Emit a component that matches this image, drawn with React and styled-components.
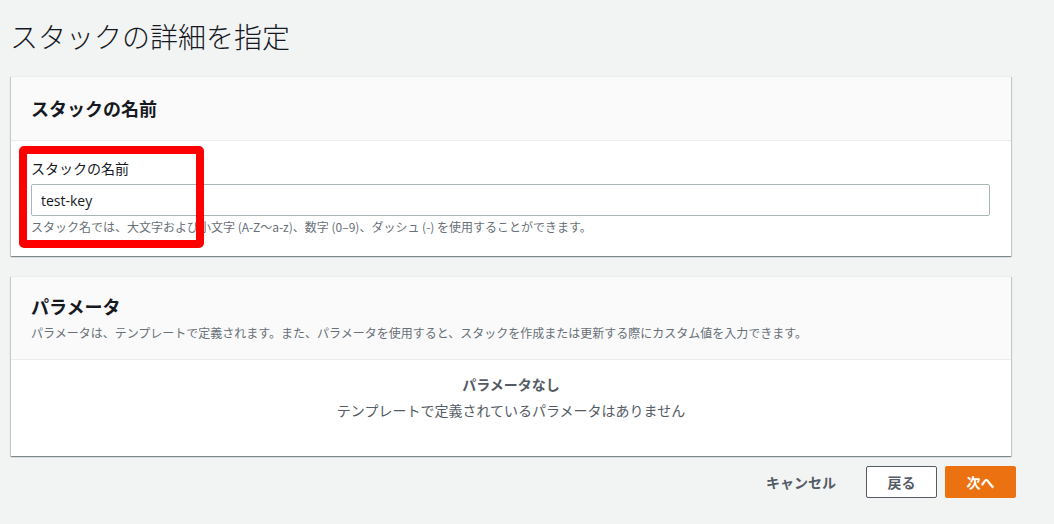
import React from "react";
import styled, { createGlobalStyle } from "styled-components";

const GlobalStyle = createGlobalStyle`
  html, body {
    margin: 0;
    padding: 0;
    background: #f2f3f3;
  }
  body {
    font-family: "Open Sans", "Noto Sans CJK JP", sans-serif;
    color: #16191f;
  }
`;

const App = () => {
  return (
    <>
      <GlobalStyle />
      <Page>
        <Title>スタックの詳細を指定</Title>

        <Card>
          <CardHeader>
            <HeaderTitle>スタックの名前</HeaderTitle>
          </CardHeader>
          <NameBody>
            <Label>スタックの名前</Label>
            <Input defaultValue="test-key" />
            <Hint>
              スタック名では、大文字および小文字 (A-Z～a-z)、数字 (0–9)、ダッシュ (-) を使用することができます。
            </Hint>
            <Highlight />
          </NameBody>
        </Card>

        <Card>
          <CardHeader $tall>
            <HeaderTitle>パラメータ</HeaderTitle>
            <Hint>
              パラメータは、テンプレートで定義されます。また、パラメータを使用すると、スタックを作成または更新する際にカスタム値を入力できます。
            </Hint>
          </CardHeader>
          <EmptyBody>
            <EmptyTitle>パラメータなし</EmptyTitle>
            <EmptyText>テンプレートで定義されているパラメータはありません</EmptyText>
          </EmptyBody>
        </Card>

        <Footer>
          <LinkButton>キャンセル</LinkButton>
          <Button>戻る</Button>
          <Button $primary>次へ</Button>
        </Footer>
      </Page>
    </>
  );
};

export default App;

const Page = styled.div`
  width: 1000px;
  padding: 16px 0 0 11px;
  display: flex;
  flex-direction: column;
  gap: 20px;
`;

const Title = styled.h1`
  margin: 0 0 0 -1px;
  font-size: 28px;
  line-height: 40px;
  font-weight: 300;
  color: #16191f;
  font-family: "Noto Sans CJK JP", sans-serif;
`;

const Card = styled.div`
  background: #ffffff;
  border-top: 1px solid #eaeded;
  box-shadow: 0 1px 1px 0 rgba(0, 28, 36, 0.3), 1px 1px 1px 0 rgba(0, 28, 36, 0.15),
    -1px 1px 1px 0 rgba(0, 28, 36, 0.15);
`;

const CardHeader = styled.div`
  background: #fafafa;
  border-bottom: 1px solid #eaeded;
  padding: ${(p) => (p.$tall ? "16px 20px 18px" : "0 20px 2px")};
  height: ${(p) => (p.$tall ? "auto" : "61px")};
  display: flex;
  flex-direction: column;
  justify-content: center;
  gap: 3px;
`;

const HeaderTitle = styled.h2`
  margin: 0;
  font-size: 18px;
  line-height: 26px;
  font-weight: 700;
  color: #16191f;
  font-family: "Noto Sans CJK JP", sans-serif;
`;

const NameBody = styled.div`
  position: relative;
  padding: 17px 21px 21px 20px;
  display: flex;
  flex-direction: column;
`;

const Label = styled.label`
  font-size: 14px;
  line-height: 20px;
  color: #16191f;
  font-family: "Noto Sans CJK JP", sans-serif;
  margin-bottom: 6px;
`;

const Input = styled.input`
  box-sizing: border-box;
  height: 32px;
  width: 100%;
  border: 1px solid #aab7b8;
  border-radius: 2px;
  padding: 0 9px;
  font-family: "Open Sans", "Noto Sans CJK JP", sans-serif;
  font-size: 14px;
  color: #16191f;
  background: #ffffff;
  outline: none;
`;

const Hint = styled.div`
  margin-top: 3px;
  font-size: 12px;
  line-height: 16px;
  color: #687078;
  font-family: "Noto Sans CJK JP", sans-serif;
  white-space: nowrap;
`;

const Highlight = styled.div`
  position: absolute;
  left: 8px;
  top: 5px;
  width: 185px;
  height: 102px;
  box-sizing: border-box;
  border: 8px solid #ff0000;
  border-radius: 5px;
  pointer-events: none;
`;

const EmptyBody = styled.div`
  padding: 14px 20px 36px;
  display: flex;
  flex-direction: column;
  align-items: center;
  gap: 6px;
  font-family: "Noto Sans CJK JP", sans-serif;
`;

const EmptyTitle = styled.div`
  font-size: 14px;
  line-height: 20px;
  font-weight: 700;
  color: #545b64;
`;

const EmptyText = styled.div`
  font-size: 14px;
  line-height: 20px;
  color: #545b64;
`;

const Footer = styled.div`
  width: 1005px;
  margin-top: -10px;
  display: flex;
  justify-content: flex-end;
  align-items: center;
  gap: 8px;
`;

const LinkButton = styled.button`
  border: none;
  background: transparent;
  font-family: "Noto Sans CJK JP", sans-serif;
  font-size: 14px;
  font-weight: 700;
  color: #545b64;
  padding: 0;
  margin-right: 22px;
  height: 32px;
`;

const Button = styled.button`
  box-sizing: border-box;
  width: 71px;
  height: 32px;
  border-radius: 2px;
  border: 1px solid ${(p) => (p.$primary ? "#ec7211" : "#545b64")};
  background: ${(p) => (p.$primary ? "#ec7211" : "#ffffff")};
  color: ${(p) => (p.$primary ? "#ffffff" : "#545b64")};
  font-family: "Noto Sans CJK JP", sans-serif;
  font-size: 14px;
  font-weight: 700;
  padding: 0;
`;
